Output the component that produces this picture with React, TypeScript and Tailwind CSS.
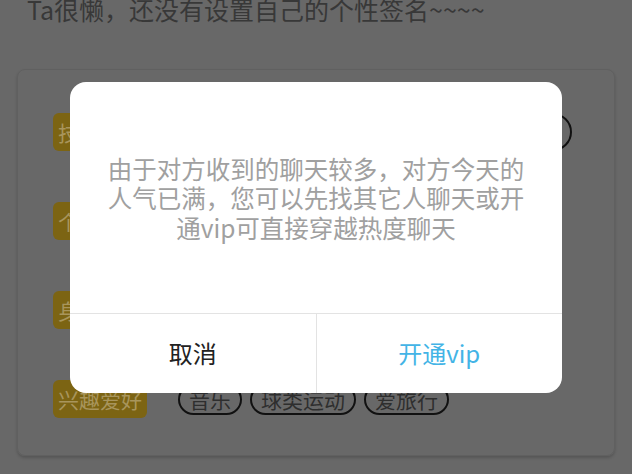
import React from "react";

const font = "font-['Noto_Sans_CJK_SC','Noto_Sans',sans-serif]";

function Badge({ text }: { text: string }) {
  return (
    <div className="h-[38px] shrink-0 rounded-[6px] bg-[#7c6413] px-[5px] text-[21px] leading-[38px] text-[#a8955c]">
      {text}
    </div>
  );
}

function Tag({ text, tall }: { text: string; tall?: boolean }) {
  return (
    <div
      className={
        tall
          ? "shrink-0 rounded-full border-2 border-[#111] px-[9px] text-[21px] leading-[34px] text-[#2e2e2e]"
          : "shrink-0 rounded-full border-2 border-[#111] px-[9px] text-[21px] leading-[27px] text-[#2e2e2e]"
      }
    >
      {text}
    </div>
  );
}

export default function App() {
  return (
    <div className={`relative h-[474px] w-[632px] overflow-hidden bg-[#686868] ${font}`}>
      <p className="-mt-[3px] px-[27px] text-[25px] leading-[24px] text-[#383838] whitespace-nowrap">
        Ta很懒，还没有设置自己的个性签名~~~~
      </p>

      <div className="mx-[17px] mt-[48px] flex h-[387px] flex-col gap-[51px] rounded-[8px] border border-[#606060] pl-[35px] pt-[43px] shadow-[0_2px_3px_rgba(0,0,0,0.18)]">
        <div className="flex items-center gap-[31px]">
          <Badge text="技能标签" />
          <div className="flex gap-2">
            <Tag tall text="唱歌" />
            <Tag tall text="看电影" />
            <Tag tall text="摄影" />
            <Tag tall text="打游戏" />
            <Tag tall text="美食" />
          </div>
        </div>
        <div className="flex items-center gap-[31px]">
          <Badge text="个人信息" />
          <span className="text-[21px] text-[#2e2e2e]">未填写</span>
        </div>
        <div className="flex items-center gap-[31px]">
          <Badge text="身高体重" />
          <span className="text-[21px] text-[#2e2e2e]">未填写</span>
        </div>
        <div className="flex items-center gap-[31px]">
          <Badge text="兴趣爱好" />
          <div className="flex gap-2">
            <Tag text="音乐" />
            <Tag text="球类运动" />
            <Tag text="爱旅行" />
          </div>
        </div>
      </div>

      <div className="absolute inset-0 flex items-center justify-center">
        <div className="flex h-[311px] w-[492px] flex-col overflow-hidden rounded-[16px] bg-white">
          <div className="flex flex-1 items-center justify-center px-[36px] pt-[2px]">
            <p className="text-center text-[24.5px] leading-[29.5px] text-[#a0a0a0]">
              由于对方收到的聊天较多，对方今天的人气已满，您可以先找其它人聊天或开通vip可直接穿越热度聊天
            </p>
          </div>
          <div className="flex h-[80px] border-t border-[#e3e3e3]">
            <button className="flex-1 text-[24px] text-[#222]">取消</button>
            <div className="w-px bg-[#e3e3e3]" />
            <button className="flex-1 text-[24px] text-[#43b4e6]">开通vip</button>
          </div>
        </div>
      </div>
    </div>
  );
}
